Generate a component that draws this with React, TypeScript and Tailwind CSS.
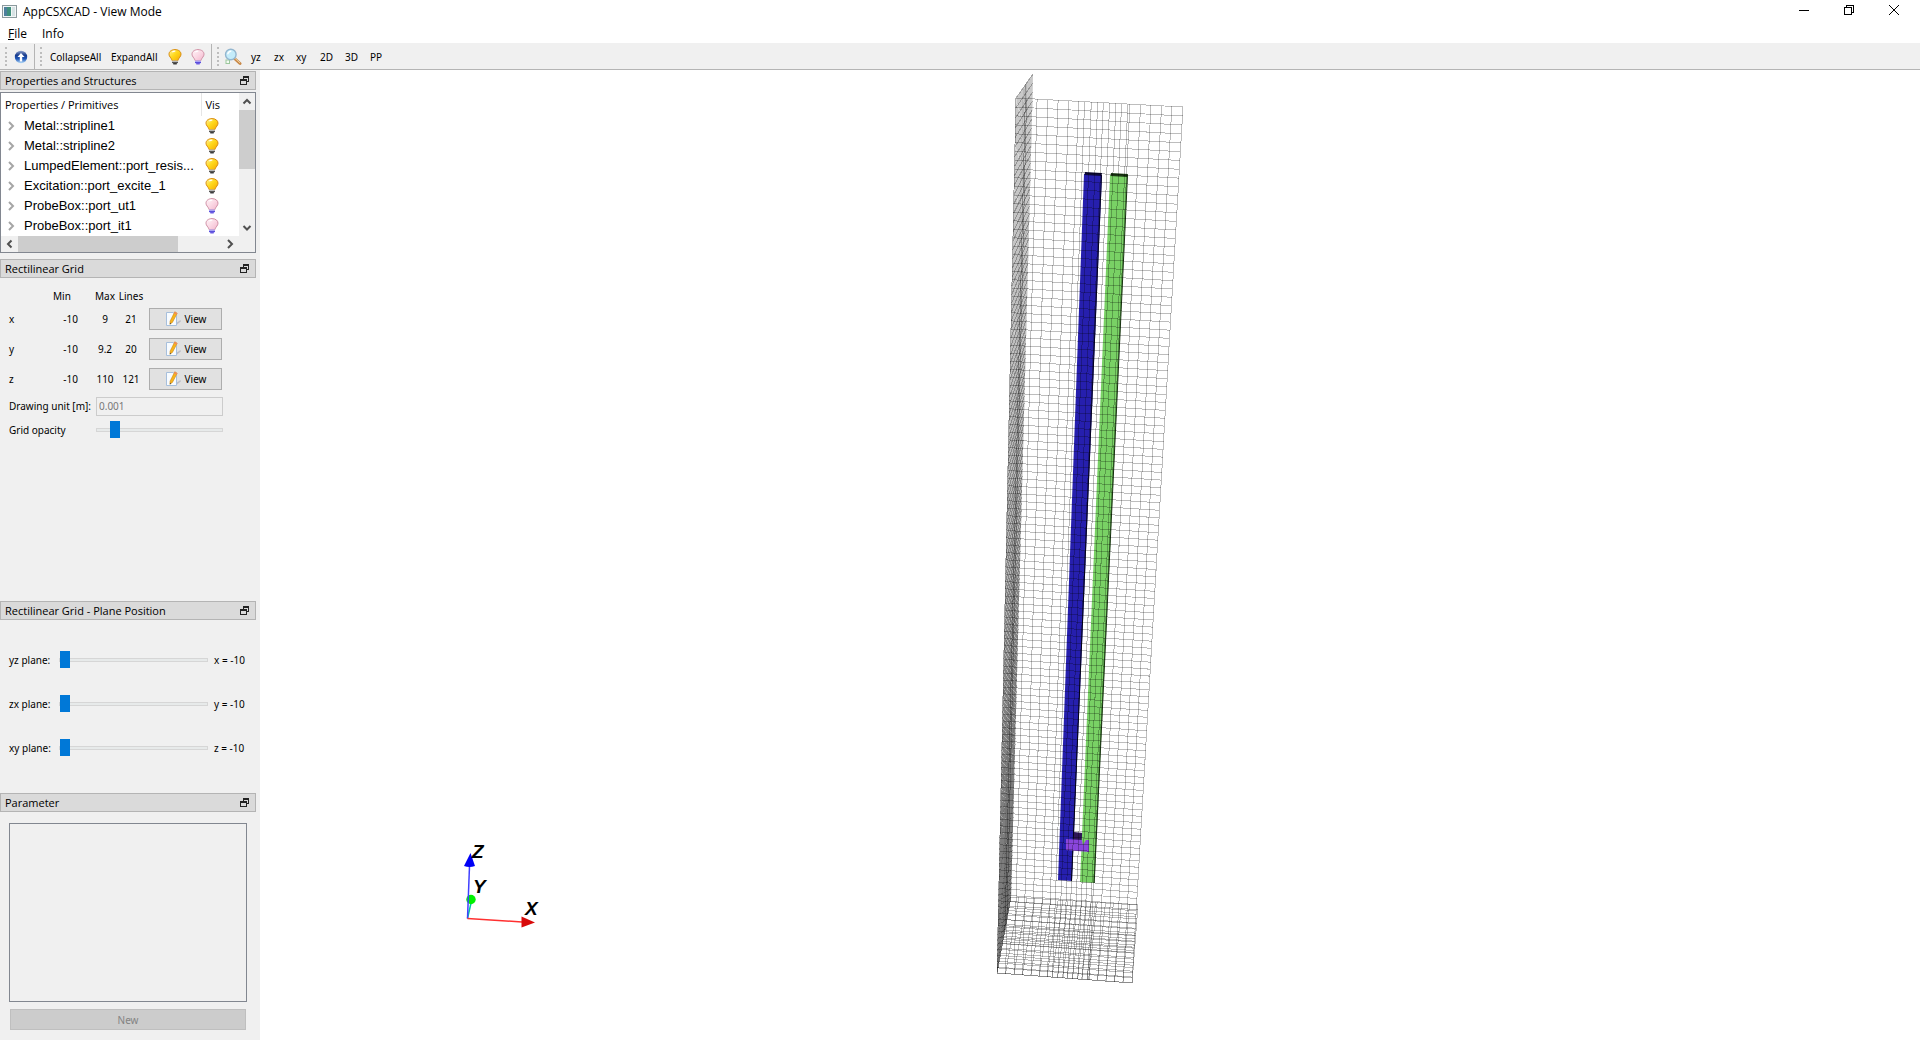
import React from "react";

const ui = "font-['Open_Sans',sans-serif] text-[12px] leading-4";
const heading = "font-['Open_Sans',sans-serif] text-[11px] leading-4";
const small = "font-['Noto_Sans',sans-serif] text-[10px] leading-4";

function Bulb({ on }: { on: boolean }) {
  const id = on ? "bulb-on" : "bulb-off";
  return (
    <svg width="14" height="16" viewBox="0 0 14 16" aria-hidden="true">
      <defs>
        <linearGradient id={id} x1="0" y1="0" x2="1" y2="1">
          <stop offset="0" stopColor={on ? "#fff3a0" : "#fff4f8"} />
          <stop offset="0.45" stopColor={on ? "#ffd91c" : "#fbdbe6"} />
          <stop offset="1" stopColor={on ? "#f5a800" : "#f3b4cc"} />
        </linearGradient>
      </defs>
      <path
        d="M7 .6C3.4.6 1 2.6 1 5.2c0 2.4 2.200 3.600 2.800 5.600.2.7.5 1.200 1 1.200h4.400c.5 0 .8-.5 1-1.200C10.800 8.800 13 7.600 13 5.200 13 2.600 10.600.6 7 .6z"
        fill={`url(#${id})`}
        stroke={on ? "#d88a10" : "#cf8fa4"}
      />
      <path d="M4.300 3.200c.8-.9 1.900-1.200 3-1.100" stroke="#fff" strokeWidth="1.200" fill="none" />
      <rect x="4" y="11.500" width="6" height="3" rx="0.800" fill={on ? "#b9b9b9" : "#a9a4f4"} />
      <rect x="4" y="13" width="6" height="1" fill={on ? "#555" : "#5a50dc"} />
      <rect x="5" y="14" width="4" height="1.500" rx="0.700" fill={on ? "#3c3c3c" : "#6a5ae0"} />
    </svg>
  );
}

function UpIcon() {
  return (
    <svg width="14" height="14" viewBox="0 0 14 14" aria-hidden="true">
      <defs>
        <linearGradient id="up-ball" x1="0" y1="0" x2="0" y2="1">
          <stop offset="0" stopColor="#8fa2cc" />
          <stop offset="0.35" stopColor="#173a8c" />
          <stop offset="0.65" stopColor="#1c55b8" />
          <stop offset="1" stopColor="#b8defa" />
        </linearGradient>
      </defs>
      <circle cx="7" cy="7" r="6.200" fill="url(#up-ball)" />
      <path d="M7 3 10.500 7H8.200v4.500H5.800V7H3.500z" fill="#fff" />
    </svg>
  );
}

function Magnifier() {
  return (
    <svg width="18" height="18" viewBox="0 0 18 18" aria-hidden="true">
      <rect x="2" y="12" width="3.500" height="3.500" fill="#f3fbf3" stroke="#9cc79c" />
      <path d="m10.500 10.500 5.500 5" stroke="#c98a4b" strokeWidth="3" strokeLinecap="round" />
      <path d="m11 10.300 5 4.600" stroke="#f0cf9a" strokeWidth="1" />
      <circle cx="6.800" cy="6.500" r="5.300" fill="#c4ecfa" stroke="#93b6cf" strokeWidth="1.400" />
      <path d="M3.800 6.200a3.200 3.200 0 0 1 3.500-2.900" stroke="#fff" strokeWidth="1.500" fill="none" />
    </svg>
  );
}

function EditIcon() {
  return (
    <svg width="16" height="16" viewBox="0 0 16 16" aria-hidden="true">
      <path d="M9 13.500 15.500 9l.3 1.500L12 13.500z" fill="#bdbdc4" />
      <path d="M1.500 1.500H8l3.500 3V14.500h-10z" fill="#f7fbff" stroke="#a7bfdc" />
      <path d="m9.800.8 2.400 1.500-4.700 9-2.600 2 .2-3.200z" fill="#f7b41c" stroke="#c9861a" strokeWidth="0.600" />
      <path d="m9.800.8 2.400 1.500-.8 1.500L9 2.300z" fill="#f28a5c" />
      <path d="m5 11.800-.1 1.500 1.300-.9z" fill="#444" />
    </svg>
  );
}

function Chevron({ dir, className }: { dir: "up" | "down" | "left" | "right"; className: string }) {
  const d = {
    up: "M1.500 6.500 5 3l3.500 3.500",
    down: "M1.500 3 5 6.500 8.500 3",
    left: "M6.500 1.500 3 5l3.500 3.500",
    right: "M3 1 7 5 3 9",
  }[dir];
  return (
    <svg width="10" height="10" viewBox="0 0 10 10" className={className} aria-hidden="true">
      <path d={d} fill="none" stroke="currentColor" strokeWidth="2" />
    </svg>
  );
}

function DockTitle({ children }: { children: React.ReactNode }) {
  return (
    <header className="mr-1 flex h-[19px] shrink-0 items-center justify-between border border-[#b4b4b4] bg-[#dadada] pr-1.5 pl-1">
      <h2 className={`${heading} pt-px text-black`}>{children}</h2>
      <button aria-label="Float panel" className="text-[#222]">
        <svg width="9" height="9" viewBox="0 0 9 9" shapeRendering="crispEdges" aria-hidden="true">
          <path d="M3 3V.500h5.500V5H6.500" fill="none" stroke="currentColor" />
          <path d="M3 1h6" stroke="currentColor" strokeWidth="2" />
          <rect x="0.500" y="3.500" width="5.500" height="5" fill="#dadada" stroke="currentColor" />
          <path d="M0 4h6.500" stroke="currentColor" strokeWidth="2" />
        </svg>
      </button>
    </header>
  );
}

const slider =
  "block h-[17px] min-w-0 appearance-none bg-transparent [&::-webkit-slider-runnable-track]:box-border [&::-webkit-slider-runnable-track]:h-1 [&::-webkit-slider-runnable-track]:border [&::-webkit-slider-runnable-track]:border-[#d6d6d6] [&::-webkit-slider-runnable-track]:bg-[#e7eaea] [&::-webkit-slider-thumb]:-mt-2 [&::-webkit-slider-thumb]:h-[17px] [&::-webkit-slider-thumb]:w-2.5 [&::-webkit-slider-thumb]:appearance-none [&::-webkit-slider-thumb]:rounded-none [&::-webkit-slider-thumb]:bg-[#0078d7]";

const tree = [
  { name: "Metal::stripline1", on: true },
  { name: "Metal::stripline2", on: true },
  { name: "LumpedElement::port_resis...", on: true },
  { name: "Excitation::port_excite_1", on: true },
  { name: "ProbeBox::port_ut1", on: false },
  { name: "ProbeBox::port_it1", on: false },
];

function PropertyTree() {
  return (
    <section className="flex flex-col">
      <DockTitle>Properties and Structures</DockTitle>
      <div className="mt-0.5 mr-1 border border-[#828790] bg-white">
        <div className="flex">
          <div className="min-w-0 flex-1">
            <table className="w-full table-fixed border-collapse">
              <thead>
                <tr className={`${heading} h-[23px] text-left`}>
                  <th className="w-[200px] border-r border-[#e5e5e5] p-0 pl-1 font-normal">Properties / Primitives</th>
                  <th className="p-0 pl-1 font-normal">Vis</th>
                </tr>
              </thead>
              <tbody>
                {tree.map((row) => (
                  <tr key={row.name} className="h-5">
                    <td className="p-0">
                      <div className="flex items-center">
                        <button aria-label={`Expand ${row.name}`} className="ml-[5px]">
                          <Chevron dir="right" className="text-[#a6a6a6]" />
                        </button>
                        <span className="ml-2 flex-1 font-['Liberation_Sans',sans-serif] text-[13px] leading-5 whitespace-nowrap">
                          {row.name}
                        </span>
                      </div>
                    </td>
                    <td className="p-0 pl-1">
                      <Bulb on={row.on} />
                    </td>
                  </tr>
                ))}
              </tbody>
            </table>
          </div>
          <div className="flex w-4 flex-col items-center justify-between bg-[#f0f0f0]">
            <button aria-label="Scroll up" className="flex h-[17px] items-center">
              <Chevron dir="up" className="text-[#505050]" />
            </button>
            <div className="h-[59px] w-full bg-[#cdcdcd]" />
            <div className="flex-1" />
            <button aria-label="Scroll down" className="flex h-[17px] items-center">
              <Chevron dir="down" className="text-[#505050]" />
            </button>
          </div>
        </div>
        <div className="flex h-4 items-center bg-[#f0f0f0] pr-[17px]">
          <button aria-label="Scroll left" className="flex w-[17px] justify-center">
            <Chevron dir="left" className="text-[#505050]" />
          </button>
          <div className="h-full w-40 bg-[#cdcdcd]" />
          <div className="flex-1" />
          <button aria-label="Scroll right" className="flex w-[17px] justify-center">
            <Chevron dir="right" className="text-[#505050]" />
          </button>
        </div>
      </div>
    </section>
  );
}

const axes = [
  { axis: "x", min: "-10", max: "9", lines: "21" },
  { axis: "y", min: "-10", max: "9.2", lines: "20" },
  { axis: "z", min: "-10", max: "110", lines: "121" },
];

function GridPanel() {
  return (
    <section className={`${small} mt-1.5 flex flex-1 flex-col`}>
      <DockTitle>Rectilinear Grid</DockTitle>
      <div className="mt-2.5 mr-[37px] ml-[9px]">
        <table className="w-full table-fixed border-collapse">
          <thead>
            <tr className="h-4">
              <th className="w-11 p-0" />
              <th className="w-[25px] p-0 text-left font-normal">Min</th>
              <th className="w-[14px] p-0" />
              <th className="w-[26px] p-0 text-center font-normal">Max</th>
              <th className="w-[26px] p-0 text-center font-normal">Lines</th>
              <th className="p-0" />
            </tr>
          </thead>
          <tbody>
            {axes.map((a) => (
              <tr key={a.axis} className="h-[30px]">
                <th className="p-0 text-left font-normal">{a.axis}</th>
                <td className="p-0 text-right">{a.min}</td>
                <td className="p-0" />
                <td className="p-0 text-center">{a.max}</td>
                <td className="p-0 text-center">{a.lines}</td>
                <td className="p-0 pr-px pl-[5px]">
                  <button className="flex h-[22px] w-full items-center justify-center gap-1 border border-[#adadad] bg-[#e1e1e1]">
                    <EditIcon />
                    View
                  </button>
                </td>
              </tr>
            ))}
          </tbody>
        </table>
        <div className="flex h-6 items-center">
          <label htmlFor="unit" className="w-[87px]">
            Drawing unit [m]:
          </label>
          <input
            id="unit"
            disabled
            defaultValue="0.001"
            className="h-[19px] min-w-0 flex-1 border border-[#cccccc] bg-[#f0f0f0] px-0.5 text-[#787878]"
          />
        </div>
        <div className="flex h-6 items-center">
          <label htmlFor="opacity" className="w-[87px]">
            Grid opacity
          </label>
          <input id="opacity" type="range" defaultValue={11} className={`${slider} flex-1`} />
        </div>
      </div>
    </section>
  );
}

const planes = [
  { id: "yz", axis: "x" },
  { id: "zx", axis: "y" },
  { id: "xy", axis: "z" },
];

function PlanePanel() {
  return (
    <section className={small}>
      <DockTitle>Rectilinear Grid - Plane Position</DockTitle>
      <div className="mt-[18px] mb-[23px] ml-[9px]">
        {planes.map((p) => (
          <div key={p.id} className="flex h-11 items-center">
            <label htmlFor={p.id} className="w-[50px]">
              {p.id} plane:
            </label>
            <input id={p.id} type="range" defaultValue={0} className={`${slider} flex-1`} />
            <output htmlFor={p.id} className="w-[52px] pl-1.5 whitespace-nowrap">
              {p.axis} = -10
            </output>
          </div>
        ))}
      </div>
    </section>
  );
}

function ParameterPanel() {
  return (
    <section className={small}>
      <DockTitle>Parameter</DockTitle>
      <div className="mt-[11px] mr-[13px] mb-2.5 ml-[9px]">
        <div className="h-[179px] border border-[#828790]" />
        <div className="mt-[7px] px-px">
          <button disabled className="block h-[21px] w-full border border-[#bfbfbf] bg-[#cccccc] text-[#838383]">
            New
          </button>
        </div>
      </div>
    </section>
  );
}

type Pt = [number, number];

/* Projective map of the unit square onto the quad a(0,0) b(1,0) c(1,1) d(0,1). */
function project([a, b, c, d]: Pt[]) {
  const dx1 = b[0] - c[0], dx2 = d[0] - c[0], sx = a[0] - b[0] + c[0] - d[0];
  const dy1 = b[1] - c[1], dy2 = d[1] - c[1], sy = a[1] - b[1] + c[1] - d[1];
  const den = dx1 * dy2 - dx2 * dy1;
  const g = (sx * dy2 - dx2 * sy) / den;
  const h = (dx1 * sy - sx * dy1) / den;
  return (u: number, v: number) => {
    const w = g * u + h * v + 1;
    const x = ((b[0] - a[0] + g * b[0]) * u + (d[0] - a[0] + h * d[0]) * v + a[0]) / w;
    const y = ((b[1] - a[1] + g * b[1]) * u + (d[1] - a[1] + h * d[1]) * v + a[1]) / w;
    return `${x.toFixed(1)} ${y.toFixed(1)}`;
  };
}

function mesh(quad: Pt[], us: number[], vs: number[]) {
  const p = project(quad);
  return [
    ...us.map((u) => `M${p(u, 0)}L${p(u, 1)}`),
    ...vs.map((v) => `M${p(0, v)}L${p(1, v)}`),
  ];
}

const xs = [0, 0.064, 0.127, 0.191, 0.253, 0.317, 0.375, 0.412, 0.452, 0.49, 0.524, 0.562, 0.6, 0.633, 0.671, 0.683, 0.747, 0.809, 0.872, 0.934, 1];
const ys = [0, 0.063, 0.125, 0.188, 0.25, 0.312, 0.375, 0.4, 0.43, 0.47, 0.51, 0.55, 0.59, 0.625, 0.688, 0.75, 0.812, 0.875, 0.937, 1];
const zs = Array.from({ length: 121 }, (_, i) => i / 120);

const frontTL: Pt = [1016, 98], frontTR: Pt = [1183, 107], frontBR: Pt = [1132, 983], frontBL: Pt = [997, 973];
const sideTop: Pt = [1033, 74], sideBottom: Pt = [1011, 897], floorBR: Pt = [1138, 905];

const side: Pt[] = [frontTL, sideTop, sideBottom, frontBL];

const gridLines = [
  ...mesh([frontTL, frontTR, frontBR, frontBL], xs, zs),
  ...mesh(side, [0.55], zs),
  ...mesh([frontBL, frontBR, floorBR, sideBottom], xs, ys),
];
const sideLines = mesh(side, ys, []);

function Viewport() {
  return (
    <svg
      viewBox="260 70 1660 970"
      className="h-full w-full"
      role="img"
      aria-label="3D view of the rectilinear grid with two striplines"
    >
      <defs>
        <linearGradient id="side-shade" x1="0" y1="0" x2="0" y2="1">
          <stop offset="0" stopOpacity="0.14" />
          <stop offset="1" stopOpacity="0.3" />
        </linearGradient>
      </defs>
      <path d="M1084 174 1101 175 1102 175 1072 881 1058 880z" fill="#261fae" />
      <path d="M1101 175 1102 175 1072 881 1071 881z" fill="#05041c" />
      <path d="M1085 172 1102 173 1101.500 176 1084.500 175z" fill="#0c0838" />
      <path d="M1074 832 1083 833 1083 841 1074 840z" fill="#2d1556" />
      <path d="M1110 175 1127.500 176 1094.500 883 1080 882z" fill="#79d165" />
      <path d="M1127 175 1128 175 1094.700 883 1093.700 883z" fill="#16300f" />
      <path d="M1111 173 1128 174 1127.500 177 1110.500 176z" fill="#1c3a14" />
      <path d="M1066 839 1082 840 1083 845 1086 840 1089 840 1089 852 1066 850z" fill="#8a45dc" />
      <path d="M1016 98 1033 74 1011 897 997 973z" fill="url(#side-shade)" />
      <g stroke="#000" fill="none" shapeRendering="crispEdges">
        <g strokeOpacity="0.08">
          {sideLines.map((d) => (
            <path key={d} d={d} />
          ))}
        </g>
        <g strokeOpacity="0.26">
          {gridLines.map((d, i) => (
            <path key={i} d={d} />
          ))}
        </g>
      </g>
      <path d="M467.500 918.500 471 903" stroke="#00c8a0" strokeWidth="1.500" />
      <circle cx="471" cy="899.500" r="4.700" fill="#00f000" />
      <path d="M467.500 918.500 469.500 866" stroke="#4040ff" strokeWidth="1.500" />
      <path d="M470.500 853 464 866Q469.500 868 475 866z" fill="#0000f5" />
      <path d="M467.500 918.500 522 922" stroke="#ff3030" strokeWidth="1.500" />
      <path d="M521.500 916.500 535 922.500 521.500 927.500z" fill="#d80a0a" />
      <g className="font-['Liberation_Sans',sans-serif] text-[19px] font-bold italic" fill="#000">
        <text x="472" y="858">Z</text>
        <text x="473" y="893">Y</text>
        <text x="525" y="915">X</text>
      </g>
    </svg>
  );
}

function Handle() {
  return <span className="h-[19px] w-[3px] border-r-2 border-dotted border-[#bdbdbd]" />;
}

export default function App() {
  return (
    <div className={`${ui} flex h-screen flex-col overflow-hidden bg-[#f0f0f0] text-black`}>
      <header className="flex h-[23px] shrink-0 items-center bg-white pr-1 pl-0.5">
        <svg width="15" height="13" viewBox="0 0 15 13" aria-hidden="true">
          <rect x="0.500" y="0.500" width="14" height="12" fill="#f2f6f6" stroke="#8c9a9e" />
          <rect x="2" y="2" width="7" height="9" fill="#3f8f7c" />
          <path d="M2 2h3v9H2z" fill="#4d7f9c" />
          <path d="M10 2h3v9h-3z" fill="#d6e2e4" />
        </svg>
        <h1 className="ml-1.5 flex-1">AppCSXCAD - View Mode</h1>
        <button aria-label="Minimize" className="flex h-full w-[45px] items-center justify-center pb-1">
          <svg width="10" height="10" viewBox="0 0 10 10" shapeRendering="crispEdges" aria-hidden="true">
            <path d="M0 5.500h10" stroke="#000" />
          </svg>
        </button>
        <button aria-label="Restore" className="flex h-full w-[45px] items-center justify-center pb-1">
          <svg width="10" height="10" viewBox="0 0 10 10" fill="none" shapeRendering="crispEdges" aria-hidden="true">
            <path d="M2.500 2V.500h7v7H8M.500 2.500h7v7h-7z" stroke="#000" />
          </svg>
        </button>
        <button aria-label="Close" className="flex h-full w-[45px] items-center justify-center pb-1">
          <svg width="10" height="10" viewBox="0 0 10 10" aria-hidden="true">
            <path d="m0 0 10 10M10 0 0 10" stroke="#000" />
          </svg>
        </button>
      </header>
      <nav className="flex h-5 shrink-0 items-center gap-[15px] bg-white pt-0.5 pl-2">
        <button>
          <u>F</u>ile
        </button>
        <button>Info</button>
      </nav>
      <div className={`${small} flex h-[27px] shrink-0 items-center border-t border-b border-t-[#f0f0f0] border-b-[#b4b4b4]`}>
        <div className="flex h-full w-[35px] items-center gap-[7px] border-r border-[#b4b4b4] pl-1">
          <Handle />
          <button aria-label="Up">
            <UpIcon />
          </button>
        </div>
        <div className="flex h-full w-[177px] items-center border-r border-[#b4b4b4] pl-1">
          <Handle />
          <button className="ml-2 w-[61px] text-left">CollapseAll</button>
          <button className="w-[57px] text-left">ExpandAll</button>
          <button aria-label="Show all" className="w-[23px]">
            <Bulb on />
          </button>
          <button aria-label="Hide all">
            <Bulb on={false} />
          </button>
        </div>
        <div className="flex h-full items-center pl-1">
          <Handle />
          <button aria-label="Zoom to fit" className="ml-[5px] w-[27px]">
            <Magnifier />
          </button>
          <button className="w-[23px] text-left">yz</button>
          <button className="w-[22px] text-left">zx</button>
          <button className="w-6 text-left">xy</button>
          <button className="w-[25px] text-left">2D</button>
          <button className="w-[25px] text-left">3D</button>
          <button>PP</button>
        </div>
      </div>
      <div className="flex min-h-0 flex-1">
        <aside className="flex w-[260px] shrink-0 flex-col pt-px">
          <PropertyTree />
          <GridPanel />
          <PlanePanel />
          <ParameterPanel />
        </aside>
        <main className="min-w-0 flex-1 bg-white">
          <Viewport />
        </main>
      </div>
    </div>
  );
}
